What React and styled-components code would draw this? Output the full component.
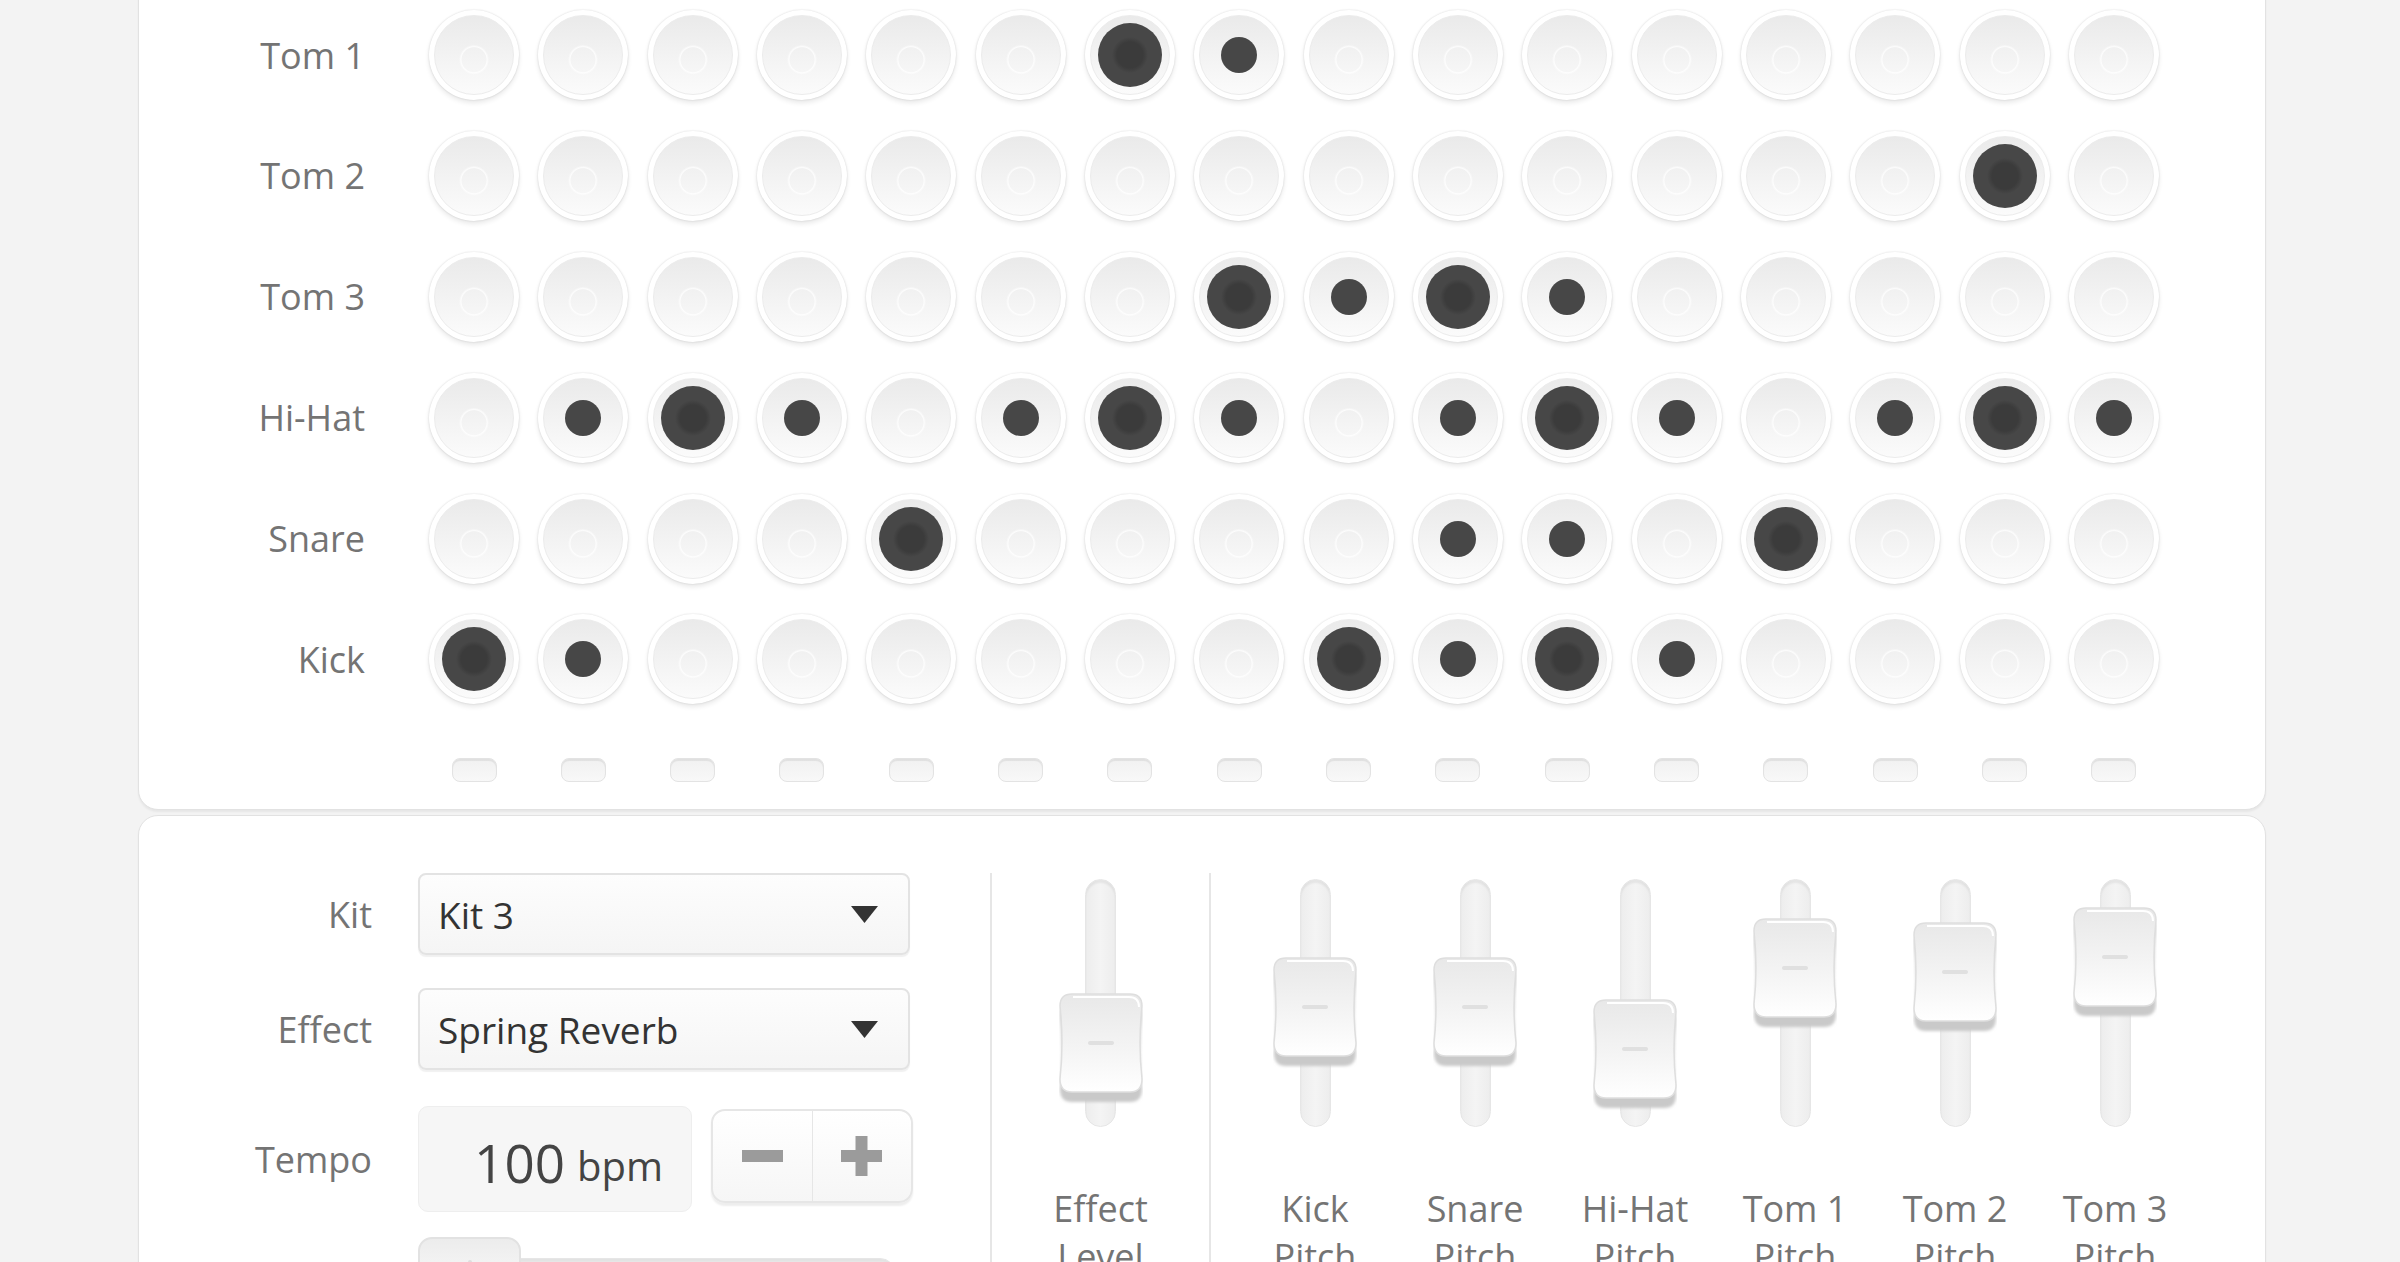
import React from 'react';
import styled, { createGlobalStyle } from 'styled-components';

const GlobalStyle = createGlobalStyle`
  html, body {
    margin: 0;
    padding: 0;
    background: #f3f3f3;
  }
  body {
    font-family: "Open Sans", "Liberation Sans", sans-serif;
    overflow: hidden;
  }
`;

const Page = styled.div`
  width: 2128px;
  margin-left: 138px;
`;

const Card = styled.section`
  background: #fff;
  border: 1px solid #e2e2e2;
  border-radius: 20px;
  box-shadow: 0 2px 2px rgba(0, 0, 0, 0.05);
  box-sizing: border-box;
`;

const SequencerCard = styled(Card)`
  margin-top: -40px;
  padding: 49px 0 27px;
`;

const Rows = styled.div`
  display: flex;
  flex-direction: column;
  gap: 30.9px;
`;

const Row = styled.div`
  display: flex;
  align-items: center;
`;

const RowLabel = styled.div`
  width: 226px;
  margin-right: 64px;
  text-align: right;
  font-size: 36px;
  color: #747474;
`;

const PadGrid = styled.div`
  display: grid;
  grid-template-columns: repeat(16, 90px);
  column-gap: 19.33px;
`;

const StepRow = styled(PadGrid)`
  margin: 54px 0 0 290px;
`;

const Pad = styled.div`
  width: 90px;
  height: 90px;
  border-radius: 50%;
  background: #fff;
  box-shadow: 0 0 2px rgba(0, 0, 0, 0.15), 0 3px 5px rgba(0, 0, 0, 0.09);
  display: flex;
  align-items: center;
  justify-content: center;
`;

const PadFace = styled.div`
  width: 80px;
  height: 80px;
  border-radius: 50%;
  box-sizing: border-box;
  border: 1px solid #ececec;
  background:
    radial-gradient(circle at 50% 56%, transparent 12px, rgba(255, 255, 255, 0.8) 13px, transparent 15px),
    linear-gradient(#eaeaea, #fbfbfb);
  display: flex;
  align-items: center;
  justify-content: center;
`;

const Dot = styled.div`
  width: ${(p) => (p.$big ? 64 : 36)}px;
  height: ${(p) => (p.$big ? 64 : 36)}px;
  border-radius: 50%;
  background: ${(p) =>
    p.$big ? 'radial-gradient(circle, #3b3b3b 0, #3b3b3b 13px, #474747 18px)' : '#474747'};
`;

const StepLed = styled.div`
  justify-self: center;
  width: 45px;
  height: 24px;
  box-sizing: border-box;
  border-radius: 8px;
  border: 1px solid #e3e3e3;
  background: linear-gradient(#f1f1f1, #f8f8f8);
  box-shadow: inset 0 2px 1px rgba(0, 0, 0, 0.07);
`;

const ControlsCard = styled(Card)`
  margin-top: 5px;
  min-height: 600px;
  padding: 57px 0 0 83px;
  display: flex;
  align-items: stretch;
`;

const Form = styled.div`
  width: 691px;
  display: flex;
  flex-direction: column;
`;

const Field = styled.div`
  display: grid;
  grid-template-columns: 150px auto;
  column-gap: 46px;
  align-items: center;
  margin-top: ${(p) => p.$gap || 0}px;
`;

const FieldLabel = styled.div`
  text-align: right;
  font-size: 36px;
  color: #747474;
`;

const SelectBox = styled.div`
  width: 492px;
  height: 82px;
  box-sizing: border-box;
  padding: 0 30px 0 18px;
  border: 2px solid #e3e3e3;
  border-radius: 8px;
  background: linear-gradient(#fdfdfd, #f5f5f5);
  box-shadow: 0 2px 1px rgba(0, 0, 0, 0.06);
  display: flex;
  align-items: center;
  justify-content: space-between;
  font-size: 37px;
  color: #333;
`;

const TempoControls = styled.div`
  display: flex;
  gap: 19px;
  align-items: flex-start;
`;

const TempoBox = styled.div`
  width: 274px;
  height: 106px;
  box-sizing: border-box;
  padding: 6px 28px 0 0;
  border: 1px solid #eeeeee;
  border-radius: 10px;
  background: #f6f6f6;
  display: flex;
  align-items: center;
  justify-content: flex-end;
  color: #444;
`;

const TempoValue = styled.span`
  font-size: 53px;
  line-height: 1;
`;

const TempoUnit = styled.span`
  font-size: 40px;
  margin-left: 12px;
  line-height: 1;
  padding-top: 8px;
`;

const Stepper = styled.div`
  margin-top: 3px;
  width: 202px;
  height: 94px;
  box-sizing: border-box;
  border: 2px solid #e6e6e6;
  border-radius: 14px;
  background: linear-gradient(#ffffff, #f6f6f6);
  box-shadow: 0 3px 2px rgba(0, 0, 0, 0.07);
  display: flex;
`;

const StepButton = styled.div`
  flex: 1;
  display: flex;
  align-items: center;
  justify-content: center;
  & + & {
    border-left: 1px solid #e6e6e6;
  }
`;

const HSlider = styled.div`
  grid-column: 2;
  position: relative;
  width: 478px;
  height: 74px;
`;

const HTrack = styled.div`
  position: absolute;
  left: 0;
  right: 0;
  top: 21px;
  height: 32px;
  box-sizing: border-box;
  border-radius: 16px;
  border: 1px solid #e6e6e6;
  background: #f1f1f1;
  box-shadow: inset 0 3px 2px rgba(0, 0, 0, 0.06);
`;

const HKnob = styled.div`
  position: absolute;
  left: 0;
  top: 0;
  width: 103px;
  height: 74px;
  box-sizing: border-box;
  border: 2px solid #e2e2e2;
  border-radius: 14px;
  background: linear-gradient(#ececec, #ffffff);
  display: flex;
  align-items: center;
  justify-content: center;
  &::after {
    content: '';
    width: 4px;
    height: 28px;
    border-radius: 2px;
    background: #dedede;
  }
`;

const Divider = styled.div`
  width: 2px;
  background: #e6e6e6;
  margin-left: ${(p) => p.$gap || 0}px;
`;

const SliderGroup = styled.div`
  display: flex;
  margin-left: ${(p) => p.$gap || 0}px;
`;

const SliderColumn = styled.div`
  width: ${(p) => p.$width}px;
  padding-top: 6px;
  display: flex;
  flex-direction: column;
  align-items: center;
`;

const TrackWrap = styled.div`
  position: relative;
  width: 84px;
  height: 248px;
  display: flex;
  justify-content: center;
`;

const VTrack = styled.div`
  width: 31px;
  height: 100%;
  box-sizing: border-box;
  border-radius: 16px;
  border: 1px solid #e6e6e6;
  background: linear-gradient(to right, #ededed, #f4f4f4, #ededed);
  box-shadow: inset 0 3px 2px rgba(0, 0, 0, 0.06);
`;

const KnobHolder = styled.div`
  position: absolute;
  left: 0;
  width: 84px;
  height: 112px;
`;

const Caption = styled.div`
  margin-top: 58px;
  width: 150px;
  text-align: center;
  font-size: 36px;
  line-height: 48px;
  color: #747474;
`;

const tracks = [
  { name: 'Tom 1', steps: '0000002100000000' },
  { name: 'Tom 2', steps: '0000000000000020' },
  { name: 'Tom 3', steps: '0000000212100000' },
  { name: 'Hi-Hat', steps: '0121012101210121' },
  { name: 'Snare', steps: '0000200001102000' },
  { name: 'Kick', steps: '2100000021210000' },
];

const pitchSliders = [
  { label: 'Kick Pitch', top: 78 },
  { label: 'Snare Pitch', top: 78 },
  { label: 'Hi-Hat Pitch', top: 120 },
  { label: 'Tom 1 Pitch', top: 39 },
  { label: 'Tom 2 Pitch', top: 43 },
  { label: 'Tom 3 Pitch', top: 28 },
];

const Arrow = () => (
  <svg width="27" height="17" viewBox="0 0 27 17">
    <polygon points="0,0 27,0 13.5,17" fill="#333" />
  </svg>
);

const Knob = () => (
  <svg width="84" height="112" viewBox="0 0 84 112">
    <defs>
      <linearGradient id="knobFace" x1="0" y1="0" x2="0" y2="1">
        <stop offset="0" stopColor="#e8e8e8" />
        <stop offset="0.55" stopColor="#f4f4f4" />
        <stop offset="1" stopColor="#ffffff" />
      </linearGradient>
      <filter id="knobBlur" x="-20%" y="-20%" width="140%" height="140%">
        <feGaussianBlur stdDeviation="1.5" />
      </filter>
    </defs>
    <path
      d="M13 10 H71 Q83 10 83 22 Q79 60 83 96 Q83 109 71 109 H13 Q1 109 1 96 Q5 60 1 22 Q1 10 13 10 Z"
      fill="#c9c9c9"
      filter="url(#knobBlur)"
    />
    <path
      d="M13 1 H71 Q83 1 83 13 Q79 50 83 86 Q83 99 71 99 H13 Q1 99 1 86 Q5 50 1 13 Q1 1 13 1 Z"
      fill="url(#knobFace)"
      stroke="#dedede"
      strokeWidth="1.5"
    />
    <path d="M14 4 H70 Q80 4 80 14" fill="none" stroke="#ffffff" strokeWidth="2" />
    <rect x="29" y="48" width="26" height="4" rx="2" fill="#e0e0e0" />
  </svg>
);

const Slider = ({ label, top, width }) => (
  <SliderColumn $width={width}>
    <TrackWrap>
      <VTrack />
      <KnobHolder style={{ top }}>
        <Knob />
      </KnobHolder>
    </TrackWrap>
    <Caption>{label}</Caption>
  </SliderColumn>
);

const Minus = () => (
  <svg width="41" height="12" viewBox="0 0 41 12">
    <rect width="41" height="12" fill="#9b9b9b" />
  </svg>
);

const Plus = () => (
  <svg width="41" height="40" viewBox="0 0 41 40">
    <rect x="0" y="14" width="41" height="12" fill="#9b9b9b" />
    <rect x="14.5" y="0" width="12" height="40" fill="#9b9b9b" />
  </svg>
);

const App = () => (
  <>
    <GlobalStyle />
    <Page>
      <SequencerCard>
        <Rows>
          {tracks.map((t) => (
            <Row key={t.name}>
              <RowLabel>{t.name}</RowLabel>
              <PadGrid>
                {t.steps.split('').map((s, i) => (
                  <Pad key={i}>
                    <PadFace>{s !== '0' && <Dot $big={s === '2'} />}</PadFace>
                  </Pad>
                ))}
              </PadGrid>
            </Row>
          ))}
        </Rows>
        <StepRow>
          {Array.from({ length: 16 }).map((_, i) => (
            <StepLed key={i} />
          ))}
        </StepRow>
      </SequencerCard>

      <ControlsCard>
        <Form>
          <Field>
            <FieldLabel>Kit</FieldLabel>
            <SelectBox>
              <span>Kit 3</span>
              <Arrow />
            </SelectBox>
          </Field>
          <Field $gap={33}>
            <FieldLabel>Effect</FieldLabel>
            <SelectBox>
              <span>Spring Reverb</span>
              <Arrow />
            </SelectBox>
          </Field>
          <Field $gap={36}>
            <FieldLabel>Tempo</FieldLabel>
            <TempoControls>
              <TempoBox>
                <TempoValue>100</TempoValue>
                <TempoUnit>bpm</TempoUnit>
              </TempoBox>
              <Stepper>
                <StepButton>
                  <Minus />
                </StepButton>
                <StepButton>
                  <Plus />
                </StepButton>
              </Stepper>
            </TempoControls>
          </Field>
          <Field $gap={25}>
            <HSlider>
              <HTrack />
              <HKnob />
            </HSlider>
          </Field>
        </Form>
        <Divider $gap={77} />
        <Slider label="Effect Level" top={114} width={217} />
        <Divider />
        <SliderGroup $gap={24}>
          {pitchSliders.map((s) => (
            <Slider key={s.label} label={s.label} top={s.top} width={160} />
          ))}
        </SliderGroup>
      </ControlsCard>
    </Page>
  </>
);

export default App;
